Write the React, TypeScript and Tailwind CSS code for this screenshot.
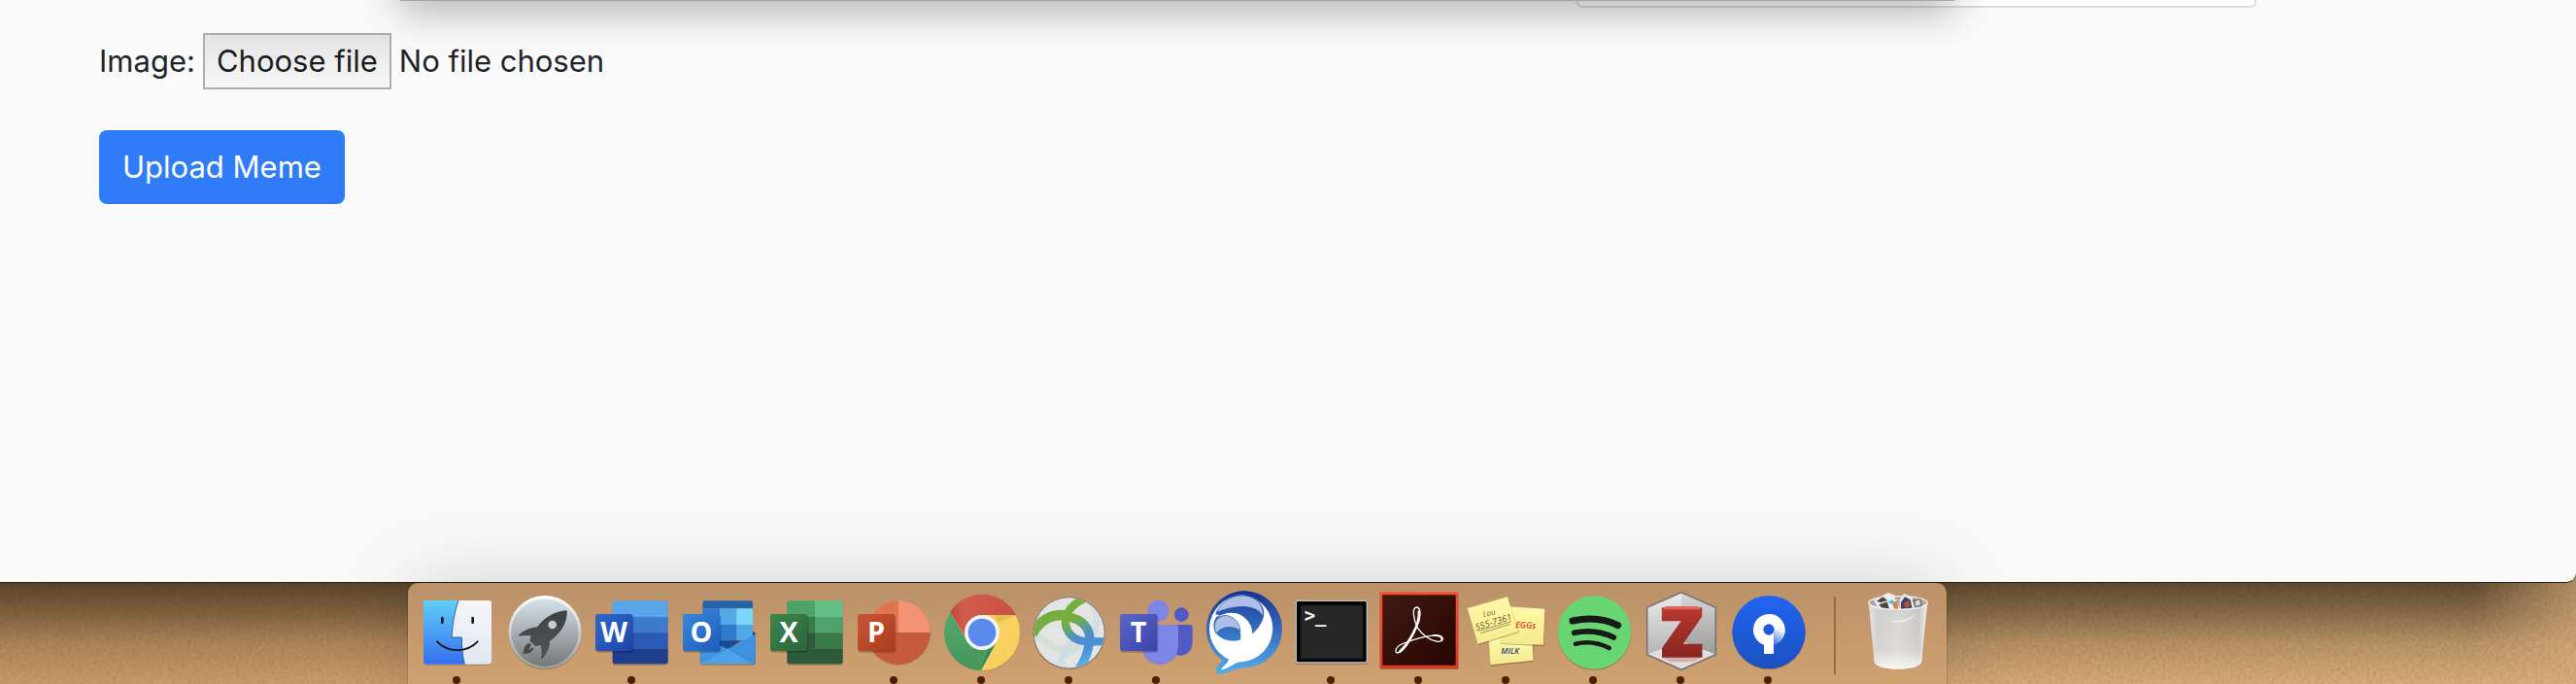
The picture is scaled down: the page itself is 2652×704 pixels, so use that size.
import { useRef, useState, type ReactNode } from "react";

type DockItem = { name: string; box: string; running?: boolean; art: ReactNode };

function Stop({ at, c, o }: { at: number; c: string; o?: number }) {
  return <stop offset={at} stopColor={c} stopOpacity={o ?? 1} />;
}

function Gradient({ id, from, to, across }: { id: string; from: string; to: string; across?: boolean }) {
  return (
    <linearGradient id={id} x1="0" y1="0" x2={across ? "1" : "0"} y2="1">
      <Stop at={0} c={from} />
      <Stop at={1} c={to} />
    </linearGradient>
  );
}

function Tile({ id, x, from, to, letter }: { id: string; x: number; from: string; to: string; letter: string }) {
  return (
    <>
      <defs>
        <Gradient id={id} from={from} to={to} across />
      </defs>
      <rect x={x + 2} y="161" width="116" height="114" rx="8" fill="#000" opacity=".22" />
      <rect x={x} y="156" width="115" height="114" rx="7" fill={`url(#${id})`} />
      <text x={x + 57} y="243" textAnchor="middle" fontSize="86" fontWeight="700" fill="#fff" className="font-['Open_Sans',sans-serif]">
        {letter}
      </text>
    </>
  );
}

const apps: DockItem[] = [
  {
    name: "Finder",
    box: "75 60 270 300",
    running: true,
    art: (
      <>
        <defs>
          <Gradient id="fnL" from="#62cef8" to="#346ff0" />
          <Gradient id="fnR" from="#f6f6f8" to="#dfe7f3" />
        </defs>
        <rect x="108" y="117" width="210" height="197" rx="7" fill="#000" opacity=".2" />
        <rect x="108" y="114" width="210" height="197" rx="7" fill="url(#fnR)" />
        <path d="M115 114H216C204 148 197 190 195 228H226C226 258 229 288 235 311H115Q108 311 108 304V121Q108 114 115 114Z" fill="url(#fnL)" />
        <path d="M216 114C204 148 197 190 195 228H226C226 258 229 288 235 311" fill="none" stroke="#1b4f8f" strokeWidth="2.5" />
        <path d="M166 168V182M260 168V182" stroke="#161a20" strokeWidth="8" strokeLinecap="round" />
        <path d="M150 241C183 276 242 276 275 241" fill="none" stroke="#10141c" strokeWidth="5.5" strokeLinecap="round" />
      </>
    ),
  },
  {
    name: "Launchpad",
    box: "345 60 270 300",
    art: (
      <>
        <defs>
          <Gradient id="lpA" from="#ffffff" to="#999b9d" />
          <Gradient id="lpB" from="#d5e4ea" to="#777777" />
          <Gradient id="lpC" from="#3d4144" to="#55585a" />
        </defs>
        <circle cx="483" cy="215" r="113" fill="#000" opacity=".2" />
        <circle cx="483" cy="212" r="113" fill="url(#lpA)" />
        <circle cx="483" cy="213" r="104" fill="url(#lpB)" />
        <path d="M550 146C513 148 480 168 460 197C437 200 416 207 402 223C418 220 431 220 442 222L438 239L454 254L470 250C475 263 476 277 473 293C488 278 496 259 496 239C529 218 551 185 550 146Z" fill="url(#lpC)" stroke="#2d3032" strokeWidth="2" />
        <circle cx="506" cy="189" r="13" fill="#c5cbce" />
        <path d="M437 246C420 249 417 266 416 279C430 280 446 275 449 259C443 260 437 264 431 270C435 262 439 257 440 252Z" fill="#45484a" />
      </>
    ),
  },
  {
    name: "Word",
    box: "615 60 270 300",
    running: true,
    art: (
      <>
        <rect x="692" y="118" width="171" height="196" rx="8" fill="#000" opacity=".2" />
        <path d="M692 165V122Q692 115 699 115H856Q863 115 863 122V165Z" fill="#5aa4ea" />
        <path d="M692 165H863V214H692Z" fill="#3f7bcd" />
        <path d="M692 214H863V263H692Z" fill="#2a59b6" />
        <path d="M692 263H863V303Q863 310 856 310H699Q692 310 692 303Z" fill="#1d3f8d" />
        <Tile id="wd" x={639} from="#2f68c8" to="#1d46a8" letter="W" />
      </>
    ),
  },
  {
    name: "Outlook",
    box: "885 60 270 300",
    art: (
      <>
        <defs>
          <Gradient id="olE" from="#4b9fe6" to="#2f83d6" across />
        </defs>
        <rect x="962" y="220" width="172" height="94" rx="7" fill="#000" opacity=".2" />
        <path d="M1118 205L1133 215V230H1118Z" fill="#123f78" />
        <path d="M970 139V122Q970 115 977 115H1118Q1125 115 1125 122V139Z" fill="#2763aa" />
        <path d="M970 139H1023V189H970Z" fill="#2f78cd" />
        <path d="M1023 139H1075V189H1023Z" fill="#52aae8" />
        <path d="M1075 139H1125V189H1075Z" fill="#79d8fc" />
        <path d="M970 189H1023V238H970Z" fill="#2765b5" />
        <path d="M1023 189H1075V238H1023Z" fill="#2f79cf" />
        <path d="M1075 189H1125V238H1075Z" fill="#4fa8e8" />
        <path d="M970 238H1090L1048 265H970Z" fill="#194c93" />
        <path d="M1133 218V303Q1133 310 1126 310H969Q962 310 962 303V222L1048 265Z" fill="url(#olE)" />
        <path d="M962 310L1048 262L1130 308Q1128 310 1126 310Z" fill="#4ea3e7" />
        <path d="M1133 218L1048 265L1132 307Z" fill="#3f90df" />
        <path d="M1048 263L1130 308" stroke="#2c77c8" strokeWidth="1.5" />
        <Tile id="ol" x={909} from="#3488dc" to="#1f5cba" letter="O" />
      </>
    ),
  },
  {
    name: "Excel",
    box: "45 60 270 300",
    art: (
      <>
        <rect x="121" y="118" width="172" height="196" rx="8" fill="#000" opacity=".2" />
        <path d="M121 165V122Q121 115 128 115H207V165Z" fill="#4fa26c" />
        <path d="M207 115H286Q293 115 293 122V165H207Z" fill="#63c087" />
        <path d="M121 165H207V214H121Z" fill="#397d4a" />
        <path d="M207 165H293V214H207Z" fill="#4fa26c" />
        <path d="M121 214H207V263H121Z" fill="#2d5b3b" />
        <path d="M207 214H293V263H207Z" fill="#397b48" />
        <path d="M121 263H293V303Q293 310 286 310H128Q121 310 121 303Z" fill="#2d593b" />
        <Tile id="xl" x={69} from="#3e8650" to="#286538" letter="X" />
      </>
    ),
  },
  {
    name: "PowerPoint",
    box: "315 60 270 300",
    running: true,
    art: (
      <>
        <circle cx="465" cy="216" r="98" fill="#000" opacity=".2" />
        <path d="M465 115A98 98 0 0 0 367 213H465Z" fill="#e17550" />
        <path d="M465 115A98 98 0 0 1 563 213H465Z" fill="#f39374" />
        <path d="M367 213A98 98 0 0 0 563 213Z" fill="#c75a3a" />
        <Tile id="pp" x={339} from="#c85634" to="#ab3a20" letter="P" />
      </>
    ),
  },
  {
    name: "Chrome",
    box: "585 60 270 300",
    running: true,
    art: (
      <>
        <defs>
          <Gradient id="chG" from="#56a76f" to="#45965d" />
          <linearGradient id="chR" x1="0" y1="0" x2="1" y2="0">
            <Stop at={0} c="#b8463a" />
            <Stop at={0.2} c="#d05c4e" />
            <Stop at={1} c="#cb5145" />
          </linearGradient>
        </defs>
        <circle cx="723" cy="215" r="117" fill="#000" opacity=".12" />
        <circle cx="723" cy="213" r="117" fill="#f8d05e" />
        <path d="M625 149A117 117 0 0 0 720 330L769 240L723 213L677 240Z" fill="url(#chG)" />
        <path d="M625 149A117 117 0 0 1 828 159H723L671 228Z" fill="url(#chR)" />
        <path d="M760 159H828L772 182Z" fill="#b78d2b" opacity=".28" />
        <path d="M720 330L768 242L742 262Z" fill="#246a3c" opacity=".4" />
        <circle cx="723" cy="213" r="54" fill="#f4f4f4" />
        <circle cx="723" cy="213" r="43" fill="#5a8aee" />
      </>
    ),
  },
  {
    name: "AnyConnect",
    box: "855 60 270 300",
    running: true,
    art: (
      <>
        <defs>
          <clipPath id="acC">
            <circle cx="992" cy="214" r="108" />
          </clipPath>
          <linearGradient id="acR" gradientUnits="userSpaceOnUse" x1="980" y1="185" x2="1040" y2="320">
            <Stop at={0} c="#75ae3e" />
            <Stop at={0.4} c="#4a90cf" />
            <Stop at={0.65} c="#4a90d2" />
            <Stop at={1} c="#59b9ef" />
          </linearGradient>
        </defs>
        <circle cx="992" cy="216" r="111" fill="#000" opacity=".25" />
        <circle cx="992" cy="214" r="110" fill="#e4e4e5" stroke="#7d7d7a" strokeWidth="3" />
        <g clipPath="url(#acC)" fill="none">
          <path d="M884 225C930 235 942 273 983 268C1005 264 1012 255 1024 262" stroke="#d7e0d6" strokeWidth="22" />
          <path d="M1050 108C1090 165 1090 230 1020 260C985 274 960 290 948 320" stroke="#cfdbdf" strokeWidth="18" opacity=".75" />
          <path d="M975 325C965 290 970 255 1010 235" stroke="#c9d9e3" strokeWidth="16" opacity=".7" />
          <path d="M986 165C973 185 986 220 1018 235C1045 246 1070 240 1105 241" stroke="url(#acR)" strokeWidth="25" />
          <path d="M986 165C1035 170 1062 205 1054 245C1050 280 1040 300 1024 325" stroke="url(#acR)" strokeWidth="28" />
          <path d="M878 219C900 174 940 154 985 160" stroke="#75ae3e" strokeWidth="31" />
          <path d="M984 168C986 144 1005 124 1040 108" stroke="#75ae3e" strokeWidth="25" />
        </g>
      </>
    ),
  },
  {
    name: "Teams",
    box: "45 60 270 300",
    running: true,
    art: (
      <>
        <circle cx="259" cy="158" r="22" fill="#5059c3" />
        <path d="M232 189H285Q293 189 293 197V243C293 296 225 295 225 255Z" fill="#515bc4" />
        <circle cx="187" cy="146" r="33" fill="#7d86e3" />
        <path d="M137 191H241Q249 191 249 199V256C249 330 137 330 137 256Z" fill="#000" opacity=".22" />
        <path d="M137 189H241Q249 189 249 197V254C249 330 137 330 137 254Z" fill="#7d86e4" />
        <Tile id="tm" x={69} from="#5b66c9" to="#3b43a8" letter="T" />
      </>
    ),
  },
  {
    name: "Jabber",
    box: "315 60 270 300",
    art: (
      <>
        <defs>
          <Gradient id="jbO" from="#17308f" to="#56adec" />
          <Gradient id="jbI" from="#1e3f9d" to="#3a80cc" />
        </defs>
        <path d="M453 84A119 119 0 0 1 449 322C421 325 401 340 379 342C362 341 363 325 370 317L386 300A119 119 0 0 1 453 84Z" fill="url(#jbO)" />
        <path d="M455 98A104 104 0 0 1 446 304C421 305 405 325 382 328C382 318 402 311 405 296A104 104 0 0 1 455 98Z" fill="#fff" />
        <path d="M364 158C382 116 425 93 470 101C507 113 526 147 505 184C487 221 445 244 405 238C374 231 355 211 359 184C361 171 367 163 377 158Z" fill="url(#jbI)" />
        <path d="M366 151C385 110 432 90 472 103C503 114 514 139 511 165C500 139 466 130 434 134C405 136 380 146 366 151Z" fill="#adbfe6" stroke="#2b50a5" strokeWidth="2" />
        <path d="M370 166C399 144 440 149 461 174C474 189 478 203 478 218C464 229 455 234 441 236C445 210 437 190 421 175C406 160 386 157 370 166Z" fill="#fff" />
        <path d="M366 216C353 187 366 164 394 160C419 162 440 183 441 208C418 191 385 193 366 216Z" fill="#a9bfe4" stroke="#2b50a5" strokeWidth="2" />
      </>
    ),
  },
  {
    name: "Terminal",
    box: "585 60 270 300",
    running: true,
    art: (
      <>
        <rect x="611" y="117" width="223" height="195" rx="7" fill="#000" opacity=".25" />
        <rect x="613" y="115" width="219" height="191" rx="6" fill="#050505" stroke="#b9c2c5" strokeWidth="4" />
        <rect x="627" y="129" width="192" height="165" fill="#272727" stroke="#151515" strokeWidth="2" />
        <text x="638" y="179" fontSize="57" fontWeight="700" fill="#f4f4f4" className="font-['DejaVu_Sans_Mono',monospace]">
          &gt;_
        </text>
      </>
    ),
  },
  {
    name: "Acrobat",
    box: "855 60 270 300",
    running: true,
    art: (
      <>
        <defs>
          <Gradient id="abF" from="#f05230" to="#d93c24" />
          <Gradient id="abI" from="#401a10" to="#280503" across />
        </defs>
        <rect x="872" y="91" width="242" height="236" fill="#000" opacity=".3" />
        <rect x="872" y="88" width="242" height="236" fill="url(#abF)" />
        <rect x="881" y="98" width="224" height="216" fill="url(#abI)" stroke="#5a1008" strokeWidth="2" />
        <g fill="none" stroke="#fff" strokeLinecap="round" strokeLinejoin="round">
          <path d="M986 196C976 169 970 137 985 135C1001 136 998 171 986 196C968 235 944 275 926 276C915 274 920 256 946 246C985 231 1034 216 1060 225C1071 231 1065 243 1049 241C1023 237 1001 217 986 196Z" strokeWidth="4" />
          <path d="M992 148C996 190 960 247 933 272" strokeWidth="7" />
          <path d="M1038 222C1055 221 1066 226 1063 236" strokeWidth="6" />
        </g>
      </>
    ),
  },
  {
    name: "Stickies",
    box: "45 60 270 300",
    running: true,
    art: (
      <>
        <defs>
          <Gradient id="stY" from="#fff9a8" to="#f5ea8c" />
        </defs>
        <path d="M130 232H266L268 303L133 317Z" fill="#000" opacity=".25" />
        <path d="M128 228H262L266 299L133 313Z" fill="url(#stY)" />
        <path d="M190 137L301 144L299 256L163 249Z" fill="#000" opacity=".25" />
        <path d="M186 133L301 140L297 251L162 247Z" fill="url(#stY)" />
        <path d="M63 142L188 108L222 213L95 253Z" fill="#000" opacity=".25" />
        <path d="M62 138L186 103L219 210L94 249Z" fill="url(#stY)" />
        <g className="font-['Open_Sans',sans-serif]" fontStyle="italic">
          <text x="112" y="165" fontSize="24" fill="#6d673b" transform="rotate(-12 112 165)">Lou</text>
          <text x="89" y="207" fontSize="28" fill="#5f5a36" transform="rotate(-17 89 207)">555-7361</text>
          <text x="210" y="198" fontSize="27" fontWeight="600" fill="#e03e21" transform="rotate(3 210 198)">EGGs</text>
          <text x="166" y="278" fontSize="25" fontWeight="600" fill="#29457a">MILK</text>
        </g>
        <path d="M97 208L198 179M103 215L194 187" stroke="#6d673b" strokeWidth="2" />
      </>
    ),
  },
  {
    name: "Spotify",
    box: "315 60 270 300",
    running: true,
    art: (
      <>
        <circle cx="454" cy="217" r="113" fill="#000" opacity=".2" />
        <circle cx="454" cy="213" r="113" fill="#67d672" />
        <g fill="none" stroke="#171a17" strokeLinecap="round">
          <path d="M387 177C437 167 488 171 527 191" strokeWidth="21" />
          <path d="M392 214C435 205 476 210 514 228" strokeWidth="17" />
          <path d="M396 248C434 239 470 245 500 261" strokeWidth="14" />
        </g>
      </>
    ),
  },
  {
    name: "Zotero",
    box: "585 60 270 300",
    running: true,
    art: (
      <>
        <defs>
          <Gradient id="ztZ" from="#c33c34" to="#7b211c" />
          <Gradient id="ztL" from="#ededed" to="#b4b4b4" />
          <Gradient id="ztR" from="#d8d8d8" to="#9b9b9b" />
        </defs>
        <path d="M723 91L830 137V283L723 331L616 283V137Z" fill="#000" opacity=".2" />
        <path d="M723 89L829 136V281L723 328L617 281V136Z" fill="#cfcfcf" />
        <path d="M723 89V240L617 281V136Z" fill="url(#ztL)" />
        <path d="M723 89V240L829 281V136Z" fill="url(#ztR)" />
        <path d="M723 240L829 281L723 328L617 281Z" fill="#e5dcdc" />
        <path d="M723 89L829 136V281L723 328L617 281V136Z" fill="none" stroke="#777777" strokeWidth="5" />
        <path d="M664 290H784L760 304H690Z" fill="#c05a55" opacity=".35" />
        <text x="724" y="282" textAnchor="middle" fontSize="196" fontWeight="900" fill="url(#ztZ)" stroke="url(#ztZ)" strokeWidth="16" className="font-['Roboto',sans-serif]">
          Z
        </text>
        <path d="M675 132H773L782 142H666Z" fill="#e2645c" />
      </>
    ),
  },
  {
    name: "Sourcetree",
    box: "855 60 270 300",
    running: true,
    art: (
      <>
        <defs>
          <Gradient id="srB" from="#2265f2" to="#1b50bf" />
          <linearGradient id="srF" gradientUnits="userSpaceOnUse" x1="1035" y1="205" x2="1010" y2="248">
            <Stop at={0} c="#fff" />
            <Stop at={1} c="#3f78e6" />
          </linearGradient>
        </defs>
        <circle cx="993" cy="215" r="113" fill="#000" opacity=".2" />
        <circle cx="993" cy="212" r="113" fill="url(#srB)" />
        <path d="M993 203H1043C1043 228 1027 246 1008 251L993 240Z" fill="url(#srF)" />
        <path d="M978 279V251A49 49 0 1 1 1043 203L1008 218V279Z" fill="#fff" />
        <path d="M1010 205H1043C1043 228 1027 246 1008 251V222Z" fill="url(#srF)" />
        <circle cx="993" cy="204" r="17" fill="#1f5bd8" />
      </>
    ),
  },
];

const trash = (
  <>
    <defs>
      <linearGradient id="trB" x1="0" y1="0" x2="1" y2="0">
        <Stop at={0} c="#e6e4e3" />
        <Stop at={0.15} c="#cfcdcc" />
        <Stop at={0.5} c="#d8d6d4" />
        <Stop at={0.85} c="#c9c7c5" />
        <Stop at={1} c="#f0eeee" />
      </linearGradient>
      <linearGradient id="trF" x1="0" y1="0" x2="0" y2="1">
        <Stop at={0} c="#fff" o={0} />
        <Stop at={0.7} c="#fff" o={0.15} />
        <Stop at={1} c="#fff" o={0.8} />
      </linearGradient>
    </defs>
    <path d="M667 121L686 306C690 334 828 334 832 306L851 121Z" fill="#000" opacity=".12" />
    <ellipse cx="759" cy="121" rx="91" ry="20" fill="#a9a5a1" stroke="#f3f1ef" strokeWidth="4" />
    <path d="M684 113L728 90L750 98L744 140H700Z" fill="#eeeeee" />
    <path d="M693 116L712 103L727 114L706 121ZM700 127L728 118L736 142L712 141Z" fill="#4a4644" />
    <path d="M725 116L756 110L763 141L733 142Z" fill="#f5f5f5" />
    <path d="M727 118L742 111L750 120L737 126Z" fill="#52c6e8" />
    <path d="M741 124L757 112L760 140L748 142Z" fill="#d98357" />
    <path d="M764 112L777 92L803 104L812 140H764Z" fill="#e9e9ec" />
    <path d="M768 120L780 103L797 112L803 139L768 141Z" fill="#39425f" />
    <path d="M777 122L791 114L797 131L782 138Z" fill="#b8503c" />
    <path d="M803 112L829 108L834 133L812 138Z" fill="#77746f" />
    <path d="M812 117L825 112L828 127L815 131Z" fill="#e3e1df" />
    <path d="M668 124C690 148 828 148 850 124L832 304C828 334 690 334 686 304Z" fill="url(#trB)" />
    <path d="M668 124C690 148 828 148 850 124L832 304C828 334 690 334 686 304Z" fill="url(#trF)" />
    <path d="M735 178C765 188 800 176 812 155C800 168 770 178 735 178Z" fill="#fff" opacity=".6" />
    <path d="M668 124C690 148 828 148 850 124" fill="none" stroke="#f0efee" strokeWidth="4" />
  </>
);

function DockButton({ item }: { item: DockItem }) {
  return (
    <button type="button" aria-label={item.name} className="relative block w-[90px]">
      <svg viewBox={item.box} className="block h-[100px] w-full" aria-hidden="true">
        {item.art}
      </svg>
      {item.running && <span className="absolute top-24 left-[41px] size-2 rounded-full bg-[#4f2000]" />}
    </button>
  );
}

function Wallpaper() {
  return (
    <svg className="absolute inset-0 size-full" aria-hidden="true">
      <defs>
        <filter id="grain" x="0" y="0" width="100%" height="100%">
          <feTurbulence type="fractalNoise" baseFrequency="0.3 0.25" numOctaves="3" seed="4" />
          <feColorMatrix values="0 0 0 0 .25  0 0 0 0 .13  0 0 0 0 .03  .9 .5 0 0 -.5" />
        </filter>
        <linearGradient id="sand" x1="0" y1="0" x2="1" y2="0">
          <Stop at={0} c="#cb9c6b" />
          <Stop at={1} c="#dbb080" />
        </linearGradient>
        <linearGradient id="shade" x1="0" y1="0" x2="0" y2="1">
          <Stop at={0} c="#1c1408" o={0.64} />
          <Stop at={0.3} c="#1c1408" o={0.43} />
          <Stop at={0.6} c="#1c1408" o={0.17} />
          <Stop at={1} c="#1c1408" o={0} />
        </linearGradient>
        <linearGradient id="fade" x1="0" y1="0" x2="1" y2="0">
          <Stop at={0} c="#fff" />
          <Stop at={0.96} c="#fff" />
          <Stop at={1} c="#555" />
        </linearGradient>
        <mask id="edge">
          <rect width="100%" height="100%" fill="url(#fade)" />
        </mask>
      </defs>
      <rect width="100%" height="100%" fill="url(#sand)" />
      <rect width="100%" height="100%" filter="url(#grain)" opacity=".4" />
      <rect width="100%" height="100%" fill="url(#shade)" mask="url(#edge)" />
    </svg>
  );
}

export default function App() {
  const picker = useRef<HTMLInputElement>(null);
  const [fileName, setFileName] = useState("No file chosen");

  return (
    <div className="flex min-h-screen flex-col overflow-hidden bg-[#a78658] font-['Inter',sans-serif] text-[31px] leading-[48px] text-[#212529]">
      <main className="relative flex-1 overflow-hidden rounded-br-[10px] border-b border-[#2a2018] bg-[#fafafa]">
        <form onSubmit={(e) => e.preventDefault()}>
          <input
            type="text"
            aria-label="Caption"
            className="ml-[61.2%] block h-2 w-[26.4%] rounded-b-md border-2 border-t-0 border-[#dcdcdc] bg-white"
          />
          <div className="mt-[26px] flex items-center gap-2 pl-[102px]">
            <label htmlFor="image">Image:</label>
            <input
              ref={picker}
              id="image"
              type="file"
              tabIndex={-1}
              className="sr-only"
              onChange={(e) => setFileName(e.target.files?.[0]?.name ?? "No file chosen")}
            />
            <button
              type="button"
              onClick={() => picker.current?.click()}
              className="h-[58px] border-2 border-[#adadad] bg-linear-to-b from-[#e3e3e3] to-[#f8f8f8] px-3 text-[#1c1c1c]"
            >
              Choose file
            </button>
            <output htmlFor="image">{fileName}</output>
          </div>
          <button type="submit" className="mt-[42px] ml-[102px] h-[76px] rounded-lg bg-[#307cf8] px-6 text-white">
            Upload Meme
          </button>
        </form>
        <div className="pointer-events-none absolute inset-x-0 bottom-full flex justify-center pr-[228px]">
          <div className="-mb-px h-50 w-[1600px] border-b border-[#a6a6a6] bg-[#ececec] shadow-[0_10px_40px_rgba(0,0,0,0.3)]" />
        </div>
      </main>

      <footer className="relative flex justify-center pr-[228px]">
        <Wallpaper />
        <nav
          aria-label="Dock"
          className="relative flex items-start rounded-t-[10px] bg-linear-to-b from-[#ba9169] to-[#d0a170] px-[5px] pb-1 shadow-[0_0_80px_rgba(0,0,0,0.17),0_0_2px_rgba(0,0,0,0.4)]"
        >
          {apps.map((item) => (
            <DockButton key={item.name} item={item} />
          ))}
          <span className="mt-3.5 mr-[19px] ml-[23px] h-20 w-0.5 bg-[#986c40]" />
          <DockButton item={{ name: "Trash", box: "624 60 270 300", art: trash }} />
        </nav>
      </footer>
    </div>
  );
}
